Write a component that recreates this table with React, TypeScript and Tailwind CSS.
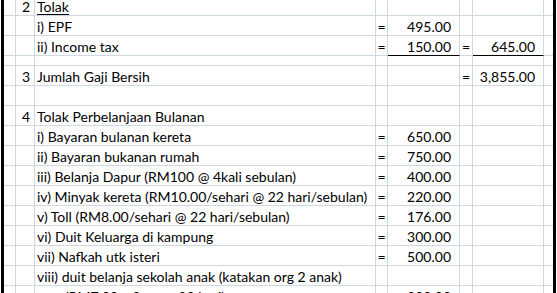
type Line = {
  id: string;
  h?: number;
  num?: string;
  text?: string;
  indent?: boolean;
  ulText?: boolean;
  eq1?: boolean;
  v1?: string;
  ul1?: boolean;
  eq2?: boolean;
  v2?: string;
  ul2?: boolean;
};

const rows: Line[] = [
  { id: 'r0', num: '2', text: 'Tolak', ulText: true },
  { id: 'r1', text: 'i) EPF', eq1: true, v1: '495.00' },
  { id: 'r2', text: 'ii) Income tax', eq1: true, v1: '150.00', ul1: true, eq2: true, v2: '645.00', ul2: true },
  { id: 'r3', h: 10 },
  { id: 'r4', num: '3', text: 'Jumlah Gaji Bersih', eq2: true, v2: '3,855.00' },
  { id: 'r5' },
  { id: 'r6', num: '4', text: 'Tolak Perbelanjaan Bulanan' },
  { id: 'r7', text: 'i) Bayaran bulanan kereta', eq1: true, v1: '650.00' },
  { id: 'r8', text: 'ii) Bayaran bukanan rumah', eq1: true, v1: '750.00' },
  { id: 'r9', text: 'iii) Belanja Dapur (RM100 @ 4kali sebulan)', eq1: true, v1: '400.00' },
  { id: 'r10', text: 'iv) Minyak kereta (RM10.00/sehari @ 22 hari/sebulan)', eq1: true, v1: '220.00' },
  { id: 'r11', text: 'v) Toll (RM8.00/sehari @ 22 hari/sebulan)', eq1: true, v1: '176.00' },
  { id: 'r12', text: 'vi) Duit Keluarga di kampung', eq1: true, v1: '300.00' },
  { id: 'r13', text: 'vii) Nafkah utk isteri', eq1: true, v1: '500.00' },
  { id: 'r14', text: 'viii) duit belanja sekolah anak (katakan org 2 anak)' },
  { id: 'r15', text: '(RM7.00 x 2 org x 22 hari)', indent: true, eq1: true, v1: '308.00' },
];

const cell = 'flex items-end border-b border-r border-[#d0d7e5]';

function SheetRow({ row }: { row: Line }) {
  const h = row.h === 10 ? 'h-[10px]' : 'h-[20px]';
  return (
    <div className={`flex ${h}`}>
      <div className="w-px" />
      <div className="w-[3px] bg-black" />
      <div className={`${cell} w-[12px]`} />
      <div className={`${cell} w-[19px] justify-end pr-[4px]`}>{row.num}</div>
      <div className={`${cell} w-[341px] whitespace-nowrap ${row.indent ? 'pl-[30px]' : 'pl-[2px]'}`}>
        {row.text && <span className={row.ulText ? 'underline underline-offset-[2px]' : ''}>{row.text}</span>}
      </div>
      <div className={`${cell} w-[12px] justify-center`}>{row.eq1 ? '=' : ''}</div>
      <div className={`${cell} w-[72px] justify-end pr-[8px] ${row.ul1 ? 'border-b-black' : ''}`}>{row.v1}</div>
      <div className={`${cell} w-[13px] justify-center`}>{row.eq2 ? '=' : ''}</div>
      <div className={`${cell} w-[71px] justify-end pr-[8px] ${row.ul2 ? 'border-b-black' : ''}`}>{row.v2}</div>
      <div className="w-[9px] border-b border-[#d0d7e5]" />
      <div className="w-[3px] bg-black" />
      <div className="flex-1" />
    </div>
  );
}

export default function App() {
  return (
    <div className="h-[293px] w-[557px] overflow-hidden bg-white font-['Lato',sans-serif] text-[14px] leading-[16px] text-black">
      <div className="-mt-[4px]">
        {rows.map((r) => (
          <SheetRow key={r.id} row={r} />
        ))}
      </div>
    </div>
  );
}
